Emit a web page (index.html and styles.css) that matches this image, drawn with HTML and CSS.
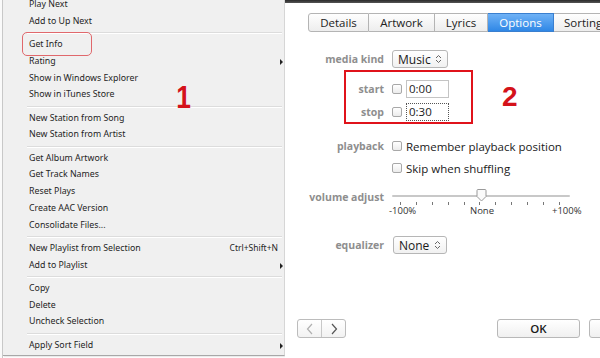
FILE: index.html
```html
<!DOCTYPE html>
<html>
<head>
<meta charset="utf-8">
<link rel="stylesheet" href="styles.css">
</head>
<body>
<div class="page">
  <div class="edge"></div>
  <div class="menu">
    <div class="item">Play Next</div>
    <div class="item">Add to Up Next</div>
    <div class="sep"></div>
    <div class="item">Get Info</div>
    <div class="item">Rating<span class="arrow"></span></div>
    <div class="item">Show in Windows Explorer</div>
    <div class="item">Show in iTunes Store</div>
    <div class="sep"></div>
    <div class="item">New Station from Song</div>
    <div class="item">New Station from Artist</div>
    <div class="sep"></div>
    <div class="item">Get Album Artwork</div>
    <div class="item">Get Track Names</div>
    <div class="item">Reset Plays</div>
    <div class="item">Create AAC Version</div>
    <div class="item">Consolidate Files...</div>
    <div class="sep"></div>
    <div class="item">New Playlist from Selection<span class="shortcut">Ctrl+Shift+N</span></div>
    <div class="item">Add to Playlist<span class="arrow"></span></div>
    <div class="sep"></div>
    <div class="item">Copy</div>
    <div class="item">Delete</div>
    <div class="item">Uncheck Selection</div>
    <div class="sep"></div>
    <div class="item">Apply Sort Field<span class="arrow"></span></div>
    <div class="hl-info"></div>
    <div class="num num-1">1</div>
  </div>
  <div class="panel">
    <div class="titlebar"></div>
    <div class="tabs">
      <div class="tab t-details">Details</div>
      <div class="tab t-artwork">Artwork</div>
      <div class="tab t-lyrics">Lyrics</div>
      <div class="tab t-options active">Options</div>
      <div class="tab t-sorting">Sorting</div>
    </div>
    <div class="row r-media">
      <div class="lbl">media kind</div>
      <div class="select s-music">Music<svg class="chev" width="7" height="10" viewBox="0 0 7 10"><path d="M1 4 L3.5 1.5 L6 4 M1 6 L3.5 8.5 L6 6" fill="none" stroke="#666" stroke-width="1"/></svg></div>
    </div>
    <div class="row r-start">
      <div class="lbl">start</div>
      <span class="cb"></span>
      <div class="time">0:00</div>
    </div>
    <div class="row r-stop">
      <div class="lbl">stop</div>
      <span class="cb"></span>
      <div class="time focus">0:30</div>
    </div>
    <div class="row r-play">
      <div class="lbl">playback</div>
      <span class="cb"></span>
      <span class="opt">Remember playback position</span>
    </div>
    <div class="row r-skip">
      <div class="lbl"></div>
      <span class="cb"></span>
      <span class="opt">Skip when shuffling</span>
    </div>
    <div class="row r-vol">
      <div class="lbl">volume adjust</div>
      <div class="slider">
        <div class="track"></div>
        <div class="ticks">
          <i></i><i></i><i></i><i></i><i></i><i></i><i></i><i></i><i></i><i></i><i></i>
        </div>
        <div class="thumb"><svg width="11" height="13" viewBox="0 0 11 13"><path d="M1 1.5 Q1 0.5 2 0.5 L9 0.5 Q10 0.5 10 1.5 L10 7.5 L5.5 12 L1 7.5 Z" fill="#fbfbfb" stroke="#9a9a9a" stroke-width="1"/></svg></div>
      </div>
    </div>
    <div class="row r-vlabels">
      <div class="lbl"></div>
      <div class="vlabels"><span>-100%</span><span>None</span><span>+100%</span></div>
    </div>
    <div class="row r-eq">
      <div class="lbl">equalizer</div>
      <div class="select s-none">None<svg class="chev" width="7" height="10" viewBox="0 0 7 10"><path d="M1 4 L3.5 1.5 L6 4 M1 6 L3.5 8.5 L6 6" fill="none" stroke="#666" stroke-width="1"/></svg></div>
    </div>
    <div class="bottom">
      <div class="nav">
        <span class="nb"><svg width="8" height="12" viewBox="0 0 8 12"><path d="M6 1 L1.5 6 L6 11" fill="none" stroke="#b0b0b0" stroke-width="1.2"/></svg></span>
        <span class="nb"><svg width="8" height="12" viewBox="0 0 8 12"><path d="M2 1 L6.5 6 L2 11" fill="none" stroke="#555" stroke-width="1.2"/></svg></span>
      </div>
      <div class="btn ok">OK</div>
      <div class="btn cancel"></div>
    </div>
    <div class="hl-time"></div>
    <div class="num num-2">2</div>
  </div>
</div>
</body>
</html>
```
FILE: styles.css
```css
html, body {
  margin: 0;
  padding: 0;
  width: 600px;
  height: 358px;
  overflow: hidden;
  background: #ffffff;
}
.page {
  display: flex;
  width: 600px;
  height: 358px;
}
.edge {
  flex: none;
  width: 3px;
  background: #fafafa;
  border-right: 1px solid #c8c8c8;
  box-sizing: border-box;
}
.menu {
  flex: none;
  position: relative;
  width: 281px;
  height: 359px;
  background: #f0f0f0;
  border-right: 1px solid #d6d6d6;
  border-bottom: 1px solid #a8a8a8;
  box-shadow: 1px 1px 1px rgba(0,0,0,0.08);
  font-family: "Noto Sans", "Open Sans", sans-serif;
  font-size: 8.8px;
  color: #1e1e1e;
  margin-top: -4px;
}
.item {
  position: relative;
  height: 16.75px;
  line-height: 16.75px;
  padding-left: 26px;
  white-space: nowrap;
}
.sep {
  height: 6.5px;
  position: relative;
}
.sep::before {
  content: "";
  position: absolute;
  left: 24px;
  right: 2px;
  top: 2.5px;
  border-top: 1px solid #dcdcdc;
  border-bottom: 1px solid #ffffff;
}
.arrow {
  position: absolute;
  right: 1px;
  top: 6px;
  width: 0;
  height: 0;
  border-left: 3px solid #222;
  border-top: 3px solid transparent;
  border-bottom: 3px solid transparent;
}
.shortcut {
  position: absolute;
  right: 6px;
  top: 0;
  font-size: 8.5px;
}
.hl-info {
  position: absolute;
  left: 19px;
  top: 36px;
  width: 68px;
  height: 22px;
  border: 1.5px solid #e0686c;
  border-radius: 5px;
}
.num {
  position: absolute;
  font-family: "Liberation Sans", Arial, sans-serif;
  font-weight: 900;
  color: #d4121a;
  line-height: 1;
}
.num-1 {
  left: 172px;
  top: 86px;
  font-size: 31px;
  transform: scaleX(0.85);
}
.panel {
  position: relative;
  flex: 1;
  min-width: 0;
  overflow: hidden;
  background: #ffffff;
  font-family: "Open Sans", "Noto Sans", sans-serif;
  font-size: 11px;
  color: #1a1a1a;
}
.titlebar {
  height: 3px;
  background: linear-gradient(#2a2a2a, #555);
}
.tabs {
  display: flex;
  margin-top: 10px;
  margin-left: 23px;
  height: 19px;
  width: 400px;
}
.tab {
  flex: none;
  height: 19px;
  box-sizing: border-box;
  border: 1px solid #b4b4b4;
  border-left: none;
  background: linear-gradient(#fefefe, #ededed);
  text-align: center;
  line-height: 17px;
  font-size: 11.5px;
  color: #222;
}
.t-details { width: 61px; border-left: 1px solid #b4b4b4; border-radius: 3px 0 0 3px; }
.t-artwork { width: 66px; }
.t-lyrics { width: 53px; }
.t-options { width: 66px; }
.t-sorting { width: 80px; text-align: left; padding-left: 10px; }
.tab.active {
  background: linear-gradient(#6fb2f6, #2f87e6);
  border-color: #3a7fcf;
  color: #fff;
}
.row {
  display: flex;
  align-items: center;
  height: 18px;
}
.lbl {
  width: 99px;
  flex: none;
  text-align: right;
  margin-right: 8px;
  color: #8e8e8e;
  font-weight: 700;
  font-size: 10.5px;
}
.r-media { margin-top: 18px; }
.r-start { margin-top: 12px; }
.r-stop { margin-top: 5px; }
.r-play { margin-top: 16px; }
.r-skip { margin-top: 4px; }
.r-vol { margin-top: 12px; height: 16px; }
.r-vlabels { height: 12px; }
.r-eq { margin-top: 19px; }
.select {
  display: flex;
  align-items: center;
  justify-content: space-between;
  height: 18px;
  box-sizing: border-box;
  border: 1px solid #b6b6b6;
  border-radius: 3px;
  background: linear-gradient(#ffffff, #f1f1f1);
  padding: 0 5px 0 5px;
  font-size: 12px;
  color: #1a1a1a;
}
.s-music { width: 56px; }
.s-none { width: 54px; margin-left: 1px; }
.cb {
  display: inline-block;
  width: 10px;
  height: 10px;
  box-sizing: border-box;
  border: 1px solid #a8a8a8;
  border-radius: 2px;
  background: linear-gradient(#ffffff, #ececec);
  margin-right: 4px;
  flex: none;
}
.time {
  width: 43px;
  height: 18px;
  box-sizing: border-box;
  border: 1px solid #c4c4c4;
  padding-left: 2px;
  line-height: 16px;
  font-size: 11.5px;
}
.time.focus {
  border: 1px dotted #555;
}
.opt {
  font-size: 11.5px;
  color: #1a1a1a;
}
.slider {
  position: relative;
  width: 178px;
  height: 16px;
}
.track {
  position: absolute;
  left: 0;
  right: 0;
  top: 6px;
  height: 2px;
  border-radius: 1px;
  background: #c8c8c8;
}
.ticks {
  position: absolute;
  left: 8px;
  right: 10px;
  top: 13px;
  display: flex;
  justify-content: space-between;
}
.ticks i {
  display: block;
  width: 1px;
  height: 3px;
  background: #777;
}
.thumb {
  position: absolute;
  left: 84px;
  top: 0;
  height: 13px;
}
.thumb svg { display: block; }
.vlabels {
  position: relative;
  width: 190px;
  height: 12px;
  font-size: 9.5px;
  color: #333;
}
.vlabels span { position: absolute; top: 0; line-height: 12px; }
.vlabels span:nth-child(1) { left: -3px; }
.vlabels span:nth-child(2) { left: 78px; }
.vlabels span:nth-child(3) { left: 160px; }
.bottom {
  position: relative;
  display: flex;
  align-items: center;
  margin-top: 65px;
  margin-left: 12px;
  height: 19px;
}
.nav {
  flex: none;
  display: flex;
  height: 19px;
  border: 1px solid #bcbcbc;
  border-radius: 3px;
  box-sizing: border-box;
  background: linear-gradient(#ffffff, #f2f2f2);
}
.nb {
  width: 23px;
  display: flex;
  align-items: center;
  justify-content: center;
}
.nb + .nb { border-left: 1px solid #c8c8c8; }
.btn {
  flex: none;
  height: 19px;
  box-sizing: border-box;
  border: 1px solid #b8b8b8;
  border-radius: 3px;
  background: linear-gradient(#ffffff, #f0f0f0);
  text-align: center;
  line-height: 17px;
  font-size: 11.5px;
  font-weight: 600;
  color: #1a1a1a;
}
.ok { width: 83px; margin-left: 151px; }
.cancel { width: 40px; margin-left: 9px; }
.hl-time {
  position: absolute;
  left: 59px;
  top: 70px;
  width: 129px;
  height: 54px;
  box-sizing: border-box;
  border: 2px solid #e0131b;
}
.num-2 {
  left: 217px;
  top: 83px;
  font-size: 28px;
}
```
